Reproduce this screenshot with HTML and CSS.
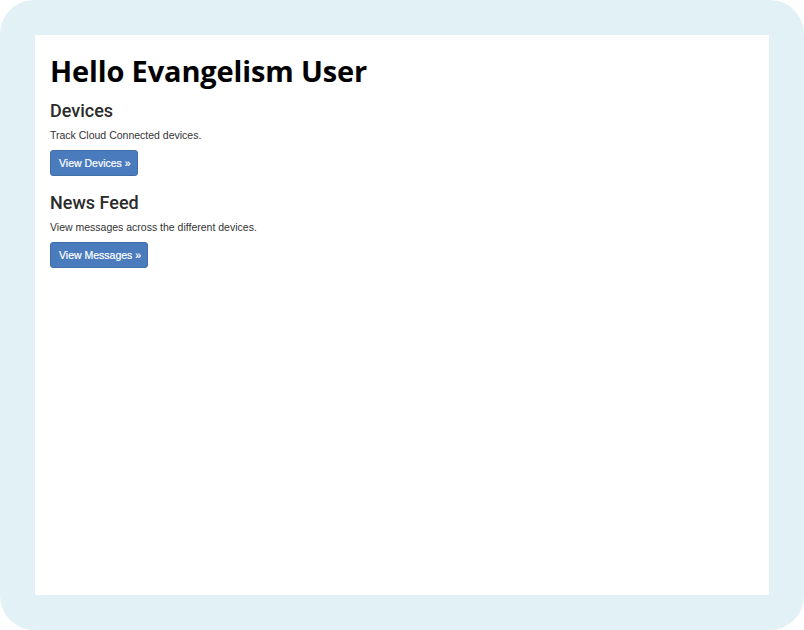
FILE: index.html
```html
<!DOCTYPE html>
<html>
<head>
<meta charset="utf-8">
<link rel="stylesheet" href="styles.css">
</head>
<body>
<div class="frame">
  <div class="screen">
    <h1 class="title">Hello Evangelism User</h1>
    <section class="block">
      <h2 class="block-title">Devices</h2>
      <p class="block-text">Track Cloud Connected devices.</p>
      <a class="btn">View Devices &raquo;</a>
    </section>
    <section class="block">
      <h2 class="block-title">News Feed</h2>
      <p class="block-text">View messages across the different devices.</p>
      <a class="btn">View Messages &raquo;</a>
    </section>
  </div>
</div>
</body>
</html>
```
FILE: styles.css
```css
html, body { margin: 0; padding: 0; background: #ffffff; }
.frame {
  width: 804px;
  height: 630px;
  box-sizing: border-box;
  padding: 35px;
  background: #e2f1f6;
  border-radius: 34px;
}
.screen {
  height: 100%;
  background: #ffffff;
  padding: 18px 15px 0 15px;
  box-sizing: border-box;
}
.title {
  margin: 0 0 11px 0;
  font-family: "Open Sans", sans-serif;
  font-weight: 700;
  font-size: 29px;
  line-height: 36px;
  color: #000;
  letter-spacing: -0.15px;
}
.block { margin-bottom: 16px; }
.block-title {
  margin: 0;
  font-family: Roboto, "Liberation Sans", Arial, sans-serif;
  font-weight: 500;
  font-size: 18px;
  line-height: 22px;
  color: #2b2b2b;
}
.block-text {
  margin: 6px 0 7px 0;
  font-family: "Liberation Sans", Arial, sans-serif;
  font-size: 10.5px;
  line-height: 15px;
  color: #333;
}
.btn {
  display: inline-block;
  box-sizing: border-box;
  height: 26px;
  padding: 0 6px 0 8px;
  line-height: 24px;
  font-family: "Liberation Sans", Arial, sans-serif;
  font-size: 10.5px;
  color: #fff;
  background: #4a7cbd;
  border: 1px solid #3f6ea9;
  border-radius: 3px;
  -webkit-text-stroke: 0.2px #fff;
}
```
